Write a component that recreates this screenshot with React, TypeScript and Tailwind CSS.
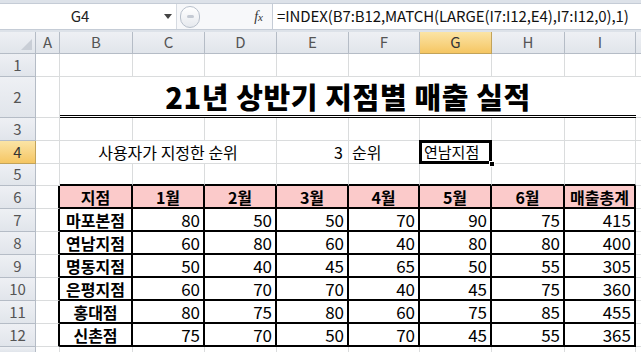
import React from "react";

const FONT = "font-['Malgun_Gothic','Noto_Sans_CJK_KR',sans-serif]";

const cols = ["A", "B", "C", "D", "E", "F", "G", "H", "I"];

const branches: [string, number[]][] = [
  ["마포본점", [80, 50, 50, 70, 90, 75, 415]],
  ["연남지점", [60, 80, 60, 40, 80, 80, 400]],
  ["명동지점", [50, 40, 45, 65, 50, 55, 305]],
  ["은평지점", [60, 70, 70, 40, 45, 75, 360]],
  ["홍대점", [80, 75, 80, 60, 75, 85, 455]],
  ["신촌점", [75, 70, 50, 70, 45, 55, 365]],
];

const months = ["1월", "2월", "3월", "4월", "5월", "6월"];

const grid = "border-r border-b border-[#dadcdd]";
const box = "border-r-2 border-b-2 border-black";

const RowHead = ({ n, active }: { n: number | string; active?: boolean }) => (
  <div
    className={
      "flex items-center justify-center border-r border-b text-[15px] " +
      (active
        ? "bg-gradient-to-b from-[#fbe4a5] to-[#f5c662] border-[#c2a35a] text-[#333]"
        : "bg-gradient-to-b from-[#eef0f4] to-[#e1e5eb] border-[#b5bcc6] text-[#555]")
    }
  >
    {n}
  </div>
);

const Cell = ({ className = "", children }: { className?: string; children?: React.ReactNode }) => (
  <div className={"flex items-center overflow-visible whitespace-nowrap " + className}>{children}</div>
);

export default function App() {
  return (
    <div className={"w-[641px] h-[352px] overflow-hidden bg-white text-black " + FONT}>
      {/* formula bar */}
      <div className="h-[32px] bg-[#dde2e9] pt-[3px] pb-[2px] flex">
        <div className="flex w-full bg-white border-y border-[#c5ccd6]">
          <div className="w-[160px] flex items-center justify-center text-[15px] text-[#222]">G4</div>
          <div className="w-[16px] flex items-center justify-center">
            <svg width="8" height="5" viewBox="0 0 8 5">
              <path d="M0 0h8L4 5z" fill="#444" />
            </svg>
          </div>
          <div className="w-[96px] flex items-center border-l border-[#d6dbe2] bg-[#f7f8fa]">
            <div className="ml-[3px] w-[20px] h-[22px] rounded-full border border-[#b8c0cb] bg-gradient-to-b from-white to-[#e6e9ee] flex items-center justify-center">
              <div className="w-[7px] h-[3px] rounded-sm bg-[#c4cad3]" />
            </div>
            <span className="ml-auto mr-[9px] text-[14px] italic font-['Liberation_Serif',serif] text-[#333]">
              f<span className="text-[11px]">x</span>
            </span>
          </div>
          <div className="flex-1 flex items-center border-l border-[#c5ccd6] pl-[4px] text-[15px] text-[#111] tracking-[-0.1px]">
            =INDEX(B7:B12,MATCH(LARGE(I7:I12,E4),I7:I12,0),1)
          </div>
        </div>
      </div>

      {/* sheet */}
      <div className="grid grid-cols-[36px_24px_73px_72px_72px_72px_71px_72px_73px_71px_1fr] grid-rows-[22px_23px_41px_23px_23px_22px_23px_23px_23px_23px_23px_23px_23px_1fr] h-[320px]">
        {/* column headers */}
        <div className="border-r border-b border-[#b5bcc6] bg-gradient-to-b from-[#eef0f4] to-[#e1e5eb] flex items-end justify-end p-[3px]">
          <svg width="11" height="11" viewBox="0 0 11 11">
            <path d="M11 0V11H0z" fill="#c9ced6" />
          </svg>
        </div>
        {cols.map((c) => (
          <div
            key={c}
            className={
              "flex items-center justify-center border-r border-b text-[15px] " +
              (c === "G"
                ? "bg-gradient-to-b from-[#fbe4a5] to-[#f5c662] border-[#c2a35a] text-[#333]"
                : "bg-gradient-to-b from-[#eef0f4] to-[#e1e5eb] border-[#b5bcc6] text-[#555]")
            }
          >
            {c}
          </div>
        ))}
        <div className="border-b border-[#b5bcc6] bg-gradient-to-b from-[#eef0f4] to-[#e1e5eb]" />

        {/* row 1 */}
        <RowHead n={1} />
        {cols.map((c) => (
          <Cell key={c} className={grid} />
        ))}
        <Cell className="border-b border-[#dadcdd]" />

        {/* row 2 */}
        <RowHead n={2} />
        <Cell className={grid} />
        <Cell className="col-span-8 justify-center border-b-[3px] border-double border-black text-[29px] font-extrabold tracking-[0.6px] pt-[2px]">
          21년 상반기 지점별 매출 실적
        </Cell>
        <Cell className="border-b border-[#dadcdd]" />

        {/* row 3 */}
        <RowHead n={3} />
        {cols.map((c) => (
          <Cell key={c} className={grid} />
        ))}
        <Cell className="border-b border-[#dadcdd]" />

        {/* row 4 */}
        <RowHead n={4} active />
        <Cell className={grid} />
        <Cell className={"col-span-3 justify-center text-[16px] " + grid}>사용자가 지정한 순위</Cell>
        <Cell className={"justify-end pr-[5px] text-[16px] " + grid}>3</Cell>
        <Cell className={"pl-[3px] text-[16px] " + grid}>순위</Cell>
        <div className="relative border-r border-b border-[#dadcdd]">
          <div className="absolute -left-[1px] -top-[1px] right-[-1px] bottom-[-1px] border-[3px] border-black flex items-center pl-[2px] text-[15px]">
            연남지점
          </div>
          <div className="absolute right-[-4px] bottom-[-4px] w-[6px] h-[6px] bg-black border border-white" />
        </div>
        <Cell className={grid} />
        <Cell className={grid} />
        <Cell className="border-b border-[#dadcdd]" />

        {/* row 5 */}
        <RowHead n={5} />
        <Cell className={grid} />
        {cols.slice(1).map((c) => (
          <Cell key={c} className="border-r border-[#dadcdd] border-b-2 border-b-black" />
        ))}
        <Cell className="border-b border-[#dadcdd]" />

        {/* row 6 */}
        <RowHead n={6} />
        <Cell className="border-r-2 border-r-black border-b border-b-[#dadcdd]" />
        <Cell className={"justify-center bg-[#fbcaca] text-[16px] font-bold " + box}>지점</Cell>
        {months.map((m) => (
          <Cell key={m} className={"justify-center bg-[#fbcaca] text-[16px] font-bold " + box}>
            {m}
          </Cell>
        ))}
        <Cell className={"justify-center bg-[#fbcaca] text-[16px] font-bold " + box}>매출총계</Cell>
        <Cell className="border-b border-[#dadcdd]" />

        {/* rows 7-12 */}
        {branches.map(([name, vals], i) => (
          <React.Fragment key={name}>
            <RowHead n={7 + i} />
            <Cell className="border-r-2 border-r-black border-b border-b-[#dadcdd]" />
            <Cell className={"justify-center text-[16px] font-bold " + box}>{name}</Cell>
            {vals.map((v, j) => (
              <Cell key={j} className={"justify-end pr-[3px] text-[17px] " + box}>
                {v}
              </Cell>
            ))}
            <Cell className="border-b border-[#dadcdd]" />
          </React.Fragment>
        ))}

        {/* row 13 partial */}
        <div className="bg-gradient-to-b from-[#eef0f4] to-[#e1e5eb] border-r border-[#b5bcc6]" />
        {cols.map((c) => (
          <Cell key={c} className="border-r border-[#dadcdd]" />
        ))}
        <Cell />
      </div>
    </div>
  );
}
